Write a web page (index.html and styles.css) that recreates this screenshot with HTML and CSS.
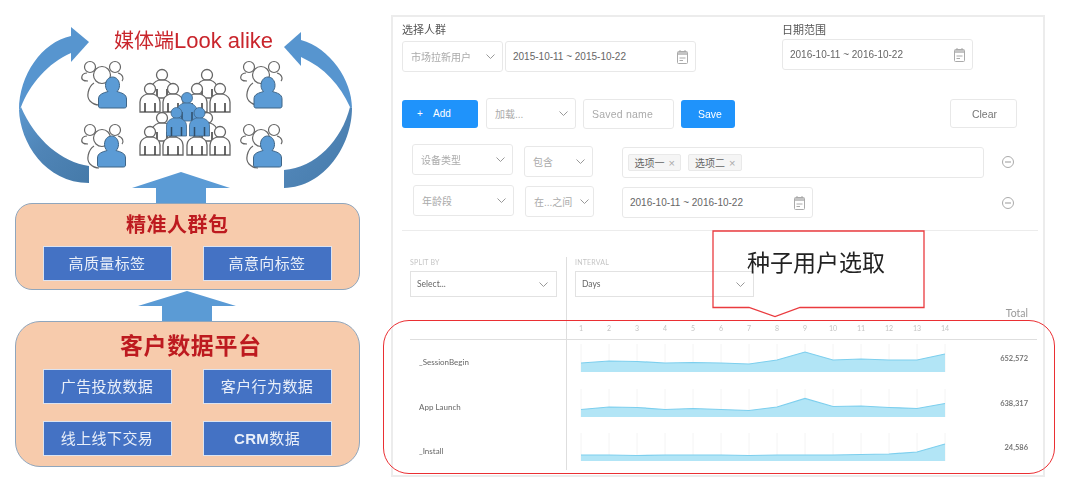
FILE: index.html
```html
<!DOCTYPE html>
<html lang="zh-CN">
<head>
<meta charset="utf-8">
<title>媒体端 Look alike</title>
<link rel="stylesheet" href="styles.css">
</head>
<body>
<svg class="defs" width="0" height="0" aria-hidden="true">
  <defs>
    <linearGradient id="fade-l" x1="0" y1="0" x2="1" y2="1">
      <stop offset="0" stop-color="#5b98cf"/><stop offset=".45" stop-color="#4f84b6"/><stop offset="1" stop-color="#457aa9"/>
    </linearGradient>
    <g id="pw">
      <circle cx="11" cy="6" r="5.500" fill="#fff" stroke="#666" stroke-width="1.300"/>
      <path d="M1 29V19C1 14 5 12 8 11H14C17 12 21 14 21 19V29Z" fill="#fff" stroke="#666" stroke-width="1.300"/>
      <path d="M6 20V29M16 20V29" fill="none" stroke="#444" stroke-width="1.600"/>
    </g>
    <g id="pb">
      <circle cx="11" cy="6" r="5.500" fill="#5b9bd5" stroke="#3f6586" stroke-width=".8"/>
      <path d="M1 29V19C1 14 5 12 8 11H14C17 12 21 14 21 19V29Z" fill="#5b9bd5" stroke="#3f6586" stroke-width=".8"/>
      <path d="M6 20V29M16 20V29" fill="none" stroke="#2f4d68" stroke-width="1.500"/>
    </g>
    <g id="crowd">
      <circle cx="9" cy="7" r="5.500" fill="#fff" stroke="#666" stroke-width="1.200"/>
      <circle cx="34" cy="7" r="5.500" fill="#fff" stroke="#666" stroke-width="1.200"/>
      <path d="M6 13C0 13 0 19 2 20C3 21 5 21 7 21M37 13C42 14 43 19 41 21" fill="none" stroke="#666" stroke-width="1.200"/>
      <circle cx="21" cy="15" r="8.500" fill="#fff" stroke="#666" stroke-width="1.200"/>
      <path d="M13 23C7 27 5 37 9 41C11 43 15 45 18 45" fill="none" stroke="#666" stroke-width="1.200"/>
    </g>
    <g id="solo">
      <path d="M7 9.500C7 4.500 10 1 14 1C18 1 21 4.500 21 9.500C21 12 20 14 18.500 15.500C23 17 28 18 28 23V30C28 31.500 27 32 26 32H2C1 32 0 31.500 0 30V23C0 18 5 17 9.500 15.500C8 14 7 12 7 9.500Z" fill="#5b9bd5" stroke="#3f6586" stroke-width="1"/>
    </g>
    <g id="cal">
      <rect x=".5" y="1.5" width="10" height="12" rx="1" fill="none" stroke="#aaa"/>
      <path d="M1 2H10V5H1Z" fill="#c4c4c4"/>
      <path d="M3 0V2M8 0V2M2.500 8H8.500M2.500 10.500H6" stroke="#aaa" fill="none"/>
    </g>
    <path id="chev" d="M.5.5 4.500 4.500 8.500.5" fill="none" stroke="#999" stroke-width="1"/>
    <g id="minus">
      <circle cx="6" cy="6" r="5.500" fill="none" stroke="#aaa"/>
      <path d="M3 6H9" stroke="#999"/>
    </g>
  </defs>
</svg>

<main class="page">
  <section class="diagram">
    <div class="hero">
      <svg class="hero-art" width="345" height="203" viewBox="15 0 345 203">
        <path d="M71 36C42 42 19 75 19 110L21 107C30 84 48 63 71 53Z" fill="#5795cf"/>
        <path d="M71 27 89 42 71 62Z" fill="#5795cf"/>
        <path d="M19 110C20 142 45 183 89 183V166C62 162 35 140 21 107Z" fill="url(#fade-l)"/>
        <path d="M301 40C330 48 352 80 352 108L350 107C340 85 325 68 301 57Z" fill="#5795cf"/>
        <path d="M301 32 284 47 301 66Z" fill="#5795cf"/>
        <path d="M352 108C352 145 325 187 284 188V170C315 168 342 140 350 107Z" fill="url(#fade-l)"/>

        <use href="#crowd" x="81" y="60"/>
        <use href="#solo" x="98.500" y="76"/>
        <use href="#crowd" x="240" y="60"/>
        <use href="#solo" x="254" y="76"/>
        <use href="#crowd" x="81" y="123"/>
        <use href="#solo" x="97.500" y="135"/>
        <use href="#crowd" x="240" y="123"/>
        <use href="#solo" x="253.500" y="135"/>

        <use href="#pw" x="151" y="69"/><use href="#pw" x="196" y="69"/>
        <use href="#pw" x="139" y="83"/><use href="#pw" x="162" y="83"/><use href="#pw" x="186" y="83"/><use href="#pw" x="209" y="83"/>
        <use href="#pw" x="151" y="112"/><use href="#pw" x="196" y="112"/>
        <use href="#pw" x="139" y="126"/><use href="#pw" x="162" y="126"/><use href="#pw" x="186" y="126"/><use href="#pw" x="209" y="126"/>
        <use href="#pb" x="176" y="92"/>
        <use href="#pb" x="165.500" y="107"/><use href="#pb" x="188.500" y="107"/>

        <path d="M181 172 230 188H206V203H156V188H132Z" fill="#5b9bd5"/>
      </svg>
      <h1 class="hero-title">媒体端<span class="hero-latin">Look alike</span></h1>
    </div>

    <div class="tier tier-a">
      <h2 class="tier-title title-a">精准人群包</h2>
      <div class="tier-grid">
        <div class="tag-box">高质量标签</div>
        <div class="tag-box">高意向标签</div>
      </div>
    </div>

    <svg class="link-arrow" width="345" height="31" viewBox="15 290 345 31">
      <path d="M187 291 236 306H212V321H162V306H138Z" fill="#5b9bd5"/>
    </svg>

    <div class="tier tier-b">
      <h2 class="tier-title title-b">客户数据平台</h2>
      <div class="tier-grid">
        <div class="tag-box">广告投放数据</div>
        <div class="tag-box">客户行为数据</div>
        <div class="tag-box">线上线下交易</div>
        <div class="tag-box"><b class="latin-b">CRM</b>数据</div>
      </div>
    </div>
  </section>

  <section class="panel">
    <div class="head">
      <div class="group group-a">
        <div class="group-label">选择人群</div>
        <div class="line">
          <div class="ctl w-101 muted">市场拉新用户<svg class="chev" width="9" height="5"><use href="#chev"/></svg></div>
          <div class="ctl w-191">2015-10-11 ~ 2015-10-22<svg class="cal" width="11" height="14"><use href="#cal"/></svg></div>
        </div>
      </div>
      <div class="group group-b">
        <div class="group-label">日期范围</div>
        <div class="ctl w-191">2016-10-11 ~ 2016-10-22<svg class="cal" width="11" height="14"><use href="#cal"/></svg></div>
      </div>
    </div>

    <div class="actions">
      <button class="btn btn-add"><span class="plus">+</span>Add</button>
      <div class="ctl w-90 h-31 muted">加载...<svg class="chev" width="9" height="5"><use href="#chev"/></svg></div>
      <div class="ctl w-91 h-30 muted saved">Saved name</div>
      <button class="btn btn-save">Save</button>
      <button class="btn btn-clear">Clear</button>
    </div>

    <div class="filter filter-1">
      <div class="ctl w-101 muted">设备类型<svg class="chev" width="9" height="5"><use href="#chev"/></svg></div>
      <div class="ctl w-69 t-2 muted">包含<svg class="chev" width="9" height="5"><use href="#chev"/></svg></div>
      <div class="ctl tags t-3">
        <span class="tag">选项一<i class="x">×</i></span>
        <span class="tag">选项二<i class="x">×</i></span>
      </div>
      <svg class="minus" width="12" height="12"><use href="#minus"/></svg>
    </div>
    <div class="filter filter-2">
      <div class="ctl w-101 muted">年龄段<svg class="chev" width="9" height="5"><use href="#chev"/></svg></div>
      <div class="ctl w-69 t-1 muted tight">在...之间<svg class="chev" width="9" height="5"><use href="#chev"/></svg></div>
      <div class="ctl w-191 t-2">2016-10-11 ~ 2016-10-22<svg class="cal" width="11" height="14"><use href="#cal"/></svg></div>
      <svg class="minus minus-2" width="12" height="12"><use href="#minus"/></svg>
    </div>

    <hr class="rule">

    <div class="analysis">
      <div class="a-row a-controls">
        <div class="a-left">
          <div class="mini-label">SPLIT BY</div>
          <div class="pick w-147">Select...<svg class="chev" width="9" height="5"><use href="#chev"/></svg></div>
        </div>
        <div class="a-right">
          <div class="interval">
            <div class="mini-label">INTERVAL</div>
            <div class="pick w-179">Days<svg class="chev" width="9" height="5"><use href="#chev"/></svg></div>
          </div>
          <div class="total-head">Total</div>
        </div>
      </div>

      <div class="a-row a-axis">
        <div class="a-left"></div>
        <div class="ticks">
          <span>1</span><span>2</span><span>3</span><span>4</span><span>5</span><span>6</span><span>7</span><span>8</span><span>9</span><span>10</span><span>11</span><span>12</span><span>13</span><span>14</span>
        </div>
      </div>

      <div class="a-row a-data">
        <div class="a-left metric">_SessionBegin</div>
        <svg class="spark" width="392" height="44" viewBox="0 0 392 44">
          <path class="grid" d="M14 4V32M42 4V32M70 4V32M98 4V32M126 4V32M154 4V32M182 4V32M210 4V32M238 4V32M266 4V32M294 4V32M322 4V32M350 4V32M378 4V32"/>
          <polygon class="area" points="14,32 14,23 42,21 70,21.500 98,23 126,22.500 154,23 182,24 210,20 238,12 266,20 294,19 322,20 350,20 378,14 378,32"/>
          <polyline class="stroke" points="14,23 42,21 70,21.500 98,23 126,22.500 154,23 182,24 210,20 238,12 266,20 294,19 322,20 350,20 378,14"/>
        </svg>
        <div class="value">652,572</div>
      </div>
      <div class="a-row a-data">
        <div class="a-left metric">App Launch</div>
        <svg class="spark" width="392" height="44" viewBox="0 0 392 44">
          <path class="grid" d="M14 4V32M42 4V32M70 4V32M98 4V32M126 4V32M154 4V32M182 4V32M210 4V32M238 4V32M266 4V32M294 4V32M322 4V32M350 4V32M378 4V32"/>
          <polygon class="area" points="14,32 14,24.500 42,22 70,22.500 98,24.500 126,23.500 154,24.500 182,25.500 210,22 238,13.500 266,21.500 294,21 322,22.500 350,23.500 378,18.500 378,32"/>
          <polyline class="stroke" points="14,24.500 42,22 70,22.500 98,24.500 126,23.500 154,24.500 182,25.500 210,22 238,13.500 266,21.500 294,21 322,22.500 350,23.500 378,18.500"/>
        </svg>
        <div class="value">638,317</div>
      </div>
      <div class="a-row a-data a-last">
        <div class="a-left metric">_Install</div>
        <svg class="spark" width="392" height="41" viewBox="0 0 392 41">
          <path class="grid" d="M14 4V32M42 4V32M70 4V32M98 4V32M126 4V32M154 4V32M182 4V32M210 4V32M238 4V32M266 4V32M294 4V32M322 4V32M350 4V32M378 4V32"/>
          <polygon class="area" points="14,32 14,26 42,26 70,26.500 98,26 126,26 154,26 182,26.500 210,26 238,26 266,26 294,25.500 322,25 350,23 378,15 378,32"/>
          <polyline class="stroke" points="14,26 42,26 70,26.500 98,26 126,26 154,26 182,26.500 210,26 238,26 266,26 294,25.500 322,25 350,23 378,15"/>
        </svg>
        <div class="value">24,586</div>
      </div>
    </div>
  </section>

  <div class="frame"></div>
  <div class="callout">
    <svg class="callout-shape" width="214" height="90" viewBox="0 0 214 90">
      <path d="M1 1H212V77.500H88L63 86.500 37 77.500H1Z" fill="none" stroke="#ea3b3f" stroke-width="1.300"/>
    </svg>
    <span class="callout-text">种子用户选取</span>
  </div>
</main>
</body>
</html>
```
FILE: styles.css
```css
* { box-sizing: border-box; }

html, body {
  margin: 0;
  padding: 0;
  background: #fff;
}

body {
  font-family: "Liberation Sans", "Noto Sans CJK SC", sans-serif;
  width: 1080px;
  height: 488px;
  overflow: hidden;
}

.defs { position: absolute; }

.page {
  position: relative;
  display: flex;
  align-items: flex-start;
  width: 1080px;
  height: 488px;
  padding-left: 15px;
}

/* left diagram */
.diagram {
  width: 345px;
  flex: none;
  filter: blur(.4px);
}

.hero {
  position: relative;
  height: 203px;
  padding: 27px 0 0 99px;
}

.hero-art {
  position: absolute;
  left: 0;
  top: 0;
}

.hero-title {
  position: relative;
  margin: 0;
  font-size: 20px;
  line-height: 28px;
  font-weight: 400;
  color: #c9252c;
  white-space: nowrap;
}

.hero-latin { font-size: 22px; }

.tier {
  background: #f7cbac;
  border: 1.5px solid #8fa6bd;
}

.tier-a {
  height: 87px;
  border-radius: 17px;
}

.tier-b {
  height: 146px;
  border-radius: 25px;
}

.tier-title {
  margin: 0;
  color: #bd1a1f;
  font-weight: 700;
  white-space: nowrap;
}

.title-a {
  height: 41.5px;
  padding-left: 110px;
  font-size: 20px;
  letter-spacing: .5px;
  line-height: 43px;
}

.title-b {
  height: 46.5px;
  padding-left: 104px;
  font-size: 23px;
  letter-spacing: .6px;
  line-height: 48px;
}

.tier-grid {
  display: grid;
  grid-template-columns: 129px 129px;
  column-gap: 31px;
  row-gap: 17px;
  padding-left: 26.5px;
}

.tag-box {
  height: 35px;
  background: #4472c4;
  border: 1px solid #dbe3f1;
  color: #e9eff9;
  font-size: 15px;
  letter-spacing: .4px;
  line-height: 33px;
  text-align: center;
  white-space: nowrap;
}

.latin-b { font-weight: 700; }

.link-arrow { display: block; }

/* right panel */
.panel {
  width: 654px;
  height: 462px;
  flex: none;
  margin: 15px 0 0 31px;
  border: 2px solid #ececec;
  color: #666;
  font-size: 10px;
  filter: blur(.35px);
}

.head {
  display: flex;
  padding: 7px 0 0 9px;
}

.group-a { width: 380px; }

.group-label {
  font-size: 11px;
  line-height: 12px;
  color: #555;
  margin-bottom: 5px;
}

.group-b .group-label { margin-bottom: 3px; }

.line {
  display: flex;
  gap: 2px;
}

.ctl {
  display: flex;
  align-items: center;
  justify-content: space-between;
  flex: none;
  height: 31px;
  padding: 0 7px 0 8px;
  background: #fff;
  border: 1px solid #e8e8e8;
  border-radius: 3px;
  white-space: nowrap;
}

.muted { color: #aaa; }
.tight { padding-right: 4px; }
.saved { font-size: 10.500px; letter-spacing: .2px; }
.w-69 { width: 69px; }
.w-90 { width: 90px; }
.w-91 { width: 91px; }
.w-101 { width: 101px; }
.w-191 { width: 191px; padding-left: 7px; }
.h-30 { height: 30px; }
.h-31 { height: 31px; }
.t-1 { margin-top: 1px; }
.t-2 { margin-top: 2px; }
.t-3 { margin-top: 3px; }

.chev, .cal, .minus { flex: none; }

.actions {
  display: flex;
  align-items: center;
  gap: 7px;
  height: 31px;
  margin-top: 26px;
  padding: 0 26px 0 9px;
}

.btn {
  font: inherit;
  height: 28px;
  border: 0;
  border-radius: 3px;
  color: #fff;
  background: #1f93fb;
  padding: 0;
}

.btn-add {
  width: 76px;
  margin-right: 1px;
  text-align: left;
  padding-left: 15px;
}

.plus {
  display: inline-block;
  width: 16px;
}

.btn-save {
  width: 54px;
  font-size: 10.500px;
  padding-left: 4px;
}

.btn-clear {
  width: 67px;
  height: 29px;
  margin-left: auto;
  background: #fff;
  color: #777;
  border: 1px solid #e8e8e8;
  font-size: 10.500px;
  padding-left: 2px;
}

.filter {
  display: flex;
  align-items: flex-start;
  height: 34px;
}

.filter-1 {
  margin-top: 15px;
  padding-left: 19px;
  gap: 11px;
}

.filter-1 .w-69 { margin-right: 18px; }

.filter-2 {
  margin-top: 7px;
  padding-left: 20px;
  gap: 11px;
}

.filter-2 .w-69 { margin-right: 17px; }

.tags {
  width: 361.500px;
  justify-content: flex-start;
  gap: 7px;
  padding-left: 5px;
}

.tag {
  display: flex;
  align-items: center;
  height: 17px;
  padding: 0 5.500px;
  background: #f5f5f5;
  border: 1px solid #e9e9e9;
  border-radius: 2px;
  color: #666;
}

.x {
  margin-left: 4px;
  font-style: normal;
  font-size: 11px;
  color: #aaa;
}

.minus {
  margin: 12px 0 0 7.500px;
}

.minus-2 {
  margin-top: 12px;
  margin-left: 177.500px;
}

.rule {
  height: 1px;
  margin: 11px 5px 0 9px;
  border: 0;
  background: #ececec;
}

.analysis {
  margin: 26px 6px 0 17px;
}

.a-row { display: flex; }

.a-left {
  width: 157px;
  flex: none;
  border-right: 1px solid #dedede;
}

.a-controls { height: 63px; }

.a-right {
  flex: 1;
  display: flex;
  justify-content: space-between;
  padding: 0 9px 0 8px;
}

.mini-label {
  height: 14px;
  font-size: 7px;
  line-height: 10px;
  color: #c5c5c5;
  letter-spacing: .2px;
  font-family: "Lato", sans-serif;
}

.pick {
  display: flex;
  align-items: center;
  justify-content: space-between;
  height: 26px;
  padding: 0 8px 0 6px;
  border: 1px solid #e2e2e2;
  font-family: "Lato", sans-serif;
  font-size: 8.500px;
  color: #666;
}

.w-147 { width: 147px; }
.w-179 { width: 179px; }

.total-head {
  align-self: flex-end;
  font-family: "Lato", sans-serif;
  font-size: 10.500px;
  line-height: 12px;
  color: #999;
  margin-bottom: 1px;
}

.a-axis {
  height: 20px;
  border-bottom: 1px solid #dedede;
}

.ticks { display: flex; }

.ticks span {
  width: 28px;
  text-align: center;
  font-family: "Lato", sans-serif;
  font-size: 7px;
  line-height: 16px;
  color: #c4c4c4;
}

.a-data { height: 44.500px; }
.a-last { height: 41px; }

.metric {
  padding: 15px 0 0 9px;
  font-family: "Lato", sans-serif;
  font-size: 8px;
  line-height: 14px;
  color: #666;
}

.spark {
  display: block;
  flex: none;
}

.grid {
  fill: none;
  stroke: #f4f4f4;
  stroke-width: 1;
}

.area { fill: #b2e5f6; }

.stroke {
  fill: none;
  stroke: #7dcfee;
  stroke-width: 1.200;
}

.value {
  flex: 1;
  padding: 12px 9px 0 0;
  text-align: right;
  font-family: "Lato", sans-serif;
  font-weight: 700;
  font-size: 7.500px;
  line-height: 14px;
  color: #777;
}

/* annotations laid over the panel */
.frame {
  position: absolute;
  left: 383px;
  top: 320px;
  width: 672px;
  height: 154px;
  border: 1.200px solid #ea2f33;
  border-radius: 26px;
}

.callout {
  position: absolute;
  left: 712px;
  top: 230px;
  width: 214px;
  height: 90px;
}

.callout-shape {
  position: absolute;
  left: 0;
  top: 0;
}

.callout-text {
  position: absolute;
  left: 35px;
  top: 17px;
  font-size: 23px;
  line-height: 32px;
  color: #222;
  white-space: nowrap;
}
```
